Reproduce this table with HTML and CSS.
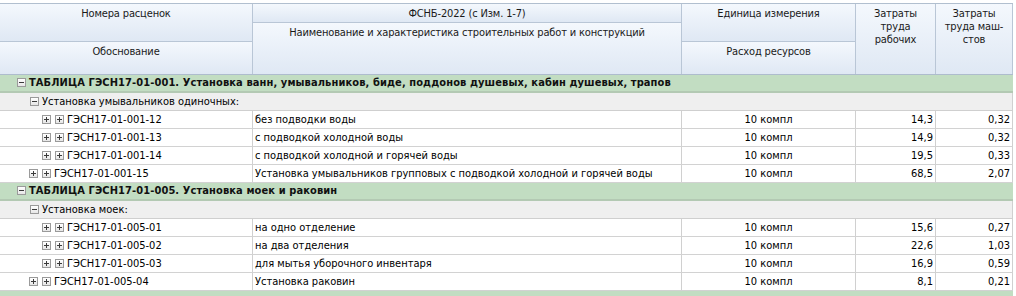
FILE: index.html
```html
<!DOCTYPE html>
<html lang="ru">
<head>
<meta charset="utf-8">
<title>ФСНБ-2022</title>
<link rel="stylesheet" href="styles.css">
</head>
<body>
<div class="table">
  <div class="head">
    <div class="hc col1 top2">Номера расценок</div>
    <div class="hc col2 top1">ФСНБ-2022 (с Изм. 1-7)</div>
    <div class="hc col3 top2">Единица измерения</div>
    <div class="hc col4 full">Затраты<br>труда<br>рабочих</div>
    <div class="hc col5 full">Затраты<br>труда маш-<br>стов</div>
    <div class="hc col1 bot1">Обоснование</div>
    <div class="hc col2 bot2">Наименование и характеристика строительных работ и конструкций</div>
    <div class="hc col3 bot1">Расход ресурсов</div>
  </div>

  <div class="row group"><span class="tg minus"></span>ТАБЛИЦА ГЭСН17-01-001. Установка ванн, умывальников, биде, поддонов душевых, кабин душевых, трапов</div>
  <div class="row sub"><span class="tg minus"></span>Установка умывальников одиночных:</div>
  <div class="row data">
    <div class="cell code lv2"><span class="tg plus"></span><span class="tg plus"></span>ГЭСН17-01-001-12</div>
    <div class="cell name">без подводки воды</div>
    <div class="cell unit">10 компл</div>
    <div class="cell num">14,3</div>
    <div class="cell num">0,32</div>
  </div>
  <div class="row data">
    <div class="cell code lv2"><span class="tg plus"></span><span class="tg plus"></span>ГЭСН17-01-001-13</div>
    <div class="cell name">с подводкой холодной воды</div>
    <div class="cell unit">10 компл</div>
    <div class="cell num">14,9</div>
    <div class="cell num">0,32</div>
  </div>
  <div class="row data">
    <div class="cell code lv2"><span class="tg plus"></span><span class="tg plus"></span>ГЭСН17-01-001-14</div>
    <div class="cell name">с подводкой холодной и горячей воды</div>
    <div class="cell unit">10 компл</div>
    <div class="cell num">19,5</div>
    <div class="cell num">0,33</div>
  </div>
  <div class="row data">
    <div class="cell code lv1"><span class="tg plus"></span><span class="tg plus"></span>ГЭСН17-01-001-15</div>
    <div class="cell name">Установка умывальников групповых с подводкой холодной и горячей воды</div>
    <div class="cell unit">10 компл</div>
    <div class="cell num">68,5</div>
    <div class="cell num">2,07</div>
  </div>

  <div class="row group"><span class="tg minus"></span>ТАБЛИЦА ГЭСН17-01-005. Установка моек и раковин</div>
  <div class="row sub"><span class="tg minus"></span>Установка моек:</div>
  <div class="row data">
    <div class="cell code lv2"><span class="tg plus"></span><span class="tg plus"></span>ГЭСН17-01-005-01</div>
    <div class="cell name">на одно отделение</div>
    <div class="cell unit">10 компл</div>
    <div class="cell num">15,6</div>
    <div class="cell num">0,27</div>
  </div>
  <div class="row data">
    <div class="cell code lv2"><span class="tg plus"></span><span class="tg plus"></span>ГЭСН17-01-005-02</div>
    <div class="cell name">на два отделения</div>
    <div class="cell unit">10 компл</div>
    <div class="cell num">22,6</div>
    <div class="cell num">1,03</div>
  </div>
  <div class="row data">
    <div class="cell code lv2"><span class="tg plus"></span><span class="tg plus"></span>ГЭСН17-01-005-03</div>
    <div class="cell name">для мытья уборочного инвентаря</div>
    <div class="cell unit">10 компл</div>
    <div class="cell num">16,9</div>
    <div class="cell num">0,59</div>
  </div>
  <div class="row data">
    <div class="cell code lv1"><span class="tg plus"></span><span class="tg plus"></span>ГЭСН17-01-005-04</div>
    <div class="cell name">Установка раковин</div>
    <div class="cell unit">10 компл</div>
    <div class="cell num">8,1</div>
    <div class="cell num">0,21</div>
  </div>
  <div class="row group"></div>
</div>
</body>
</html>
```

FILE: styles.css
```css
* { box-sizing: border-box; }
html, body { margin: 0; padding: 0; background: #ffffff; overflow: hidden; }
body {
  font-family: "DejaVu Sans Condensed", "DejaVu Sans", sans-serif;
  font-stretch: condensed;
  font-size: 11px;
  color: #000;
  padding-top: 3px;
}
.table { width: 1013px; }

.head {
  display: grid;
  grid-template-columns: 253px 429px 174px 80px 77px;
  grid-template-rows: 19px 19px 32px;
  border-top: 1px solid #b1bfcf;
  border-bottom: 1px solid #aebccd;
}
.hc {
  background: linear-gradient(#f4f8fd, #dfe8f4);
  border-right: 1px solid #b9c6d6;
  border-bottom: 1px solid #b9c6d6;
  text-align: center;
  line-height: 13px;
  padding-top: 3px;
  color: #1a1a1a;
  letter-spacing: -0.15px;
}
.hc.full, .hc.bot1, .hc.bot2 { border-bottom: 0; }
.col1 { grid-column: 1; }
.col2 { grid-column: 2; }
.col3 { grid-column: 3; }
.col4 { grid-column: 4; }
.col5 { grid-column: 5; }
.top1 { grid-row: 1; }
.top2 { grid-row: 1 / 3; }
.bot1 { grid-row: 3; }
.bot2 { grid-row: 2 / 4; }
.full { grid-row: 1 / 4; }

.row {
  height: 18px;
  line-height: 17px;
  white-space: nowrap;
  border-right: 1px solid #d0d0d0;
}
.group {
  background: #c2ddc2;
  border-bottom: 2px solid #b3c9b3;
  font-weight: bold;
  line-height: 16px;
  padding-left: 17px;
  color: #111;
  border-right: 0;
  letter-spacing: 0.1px;
}
.sub {
  background: #efefef;
  border-bottom: 1px solid #cfcfcf;
  padding-left: 30px;
}
.data {
  display: grid;
  grid-template-columns: 253px 429px 174px 80px 77px;
  border-bottom: 1px solid #d2d2d2;
  border-right: 0;
}
.cell {
  border-right: 1px solid #d0d0d0;
  overflow: hidden;
  padding: 0 2px;
}
.lv2 { padding-left: 42px; }
.lv1 { padding-left: 29px; }
.unit { text-align: center; }
.num { text-align: right; }

.tg {
  display: inline-block;
  position: relative;
  width: 9px;
  height: 9px;
  border: 1px solid #9a9a9a;
  background: linear-gradient(#ffffff, #e6e6e6);
  vertical-align: -1px;
  margin-right: 3px;
  letter-spacing: 0;
}
.code .tg { margin-right: 4px; }
.code .tg + .tg { margin-right: 3px; }
.tg::before {
  content: "";
  position: absolute;
  left: 1px;
  top: 3px;
  width: 5px;
  height: 1px;
  background: #3a3a3a;
}
.tg.plus::after {
  content: "";
  position: absolute;
  left: 3px;
  top: 1px;
  width: 1px;
  height: 5px;
  background: #3a3a3a;
}
```
